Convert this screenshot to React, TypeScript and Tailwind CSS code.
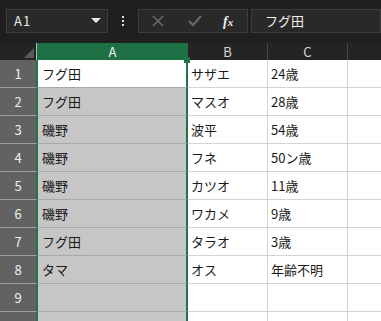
import React from "react";

const rows: [string, string, string][] = [
  ["フグ田", "サザエ", "24歳"],
  ["フグ田", "マスオ", "28歳"],
  ["磯野", "波平", "54歳"],
  ["磯野", "フネ", "50ン歳"],
  ["磯野", "カツオ", "11歳"],
  ["磯野", "ワカメ", "9歳"],
  ["フグ田", "タラオ", "3歳"],
  ["タマ", "オス", "年齢不明"],
  ["", "", ""],
  ["", "", ""],
];

const font = { fontFamily: '"Noto Sans CJK JP", "Noto Sans", sans-serif' };

export default function App() {
  return (
    <div className="w-[381px] h-[321px] overflow-hidden bg-[#1f1f1f]" style={font}>
      {/* top bar */}
      <div className="h-[43px] flex items-start pt-[9px] pl-[6px]">
        <div className="w-[102px] h-[24px] bg-[#292929] border border-[#3d3d3d] flex items-center justify-between pl-[7px] pr-[6px]">
          <span className="text-[13px] text-[#e8e8e8] tracking-[1px]">A1</span>
          <svg width="10" height="6" viewBox="0 0 10 6"><path d="M0 0 L10 0 L5 5 Z" fill="#e8e8e8" /></svg>
        </div>
        <div className="w-[30px] h-[24px] flex flex-col items-center justify-center gap-[2px]">
          <div className="w-[2px] h-[2px] bg-[#e0e0e0]" />
          <div className="w-[2px] h-[2px] bg-[#e0e0e0]" />
          <div className="w-[2px] h-[2px] bg-[#e0e0e0]" />
        </div>
        <div className="w-[110px] h-[24px] bg-[#292929] border border-[#3d3d3d] flex items-center pl-[13px]">
          <svg width="12" height="12" viewBox="0 0 12 12"><path d="M1 1 L11 11 M11 1 L1 11" stroke="#6a6a6a" strokeWidth="1.6" /></svg>
          <svg className="ml-[24px]" width="14" height="12" viewBox="0 0 14 12"><path d="M1 6 L5 10 L13 1" stroke="#6a6a6a" strokeWidth="2" fill="none" /></svg>
          <span className="ml-[21px] text-[14px] text-[#f0f0f0] italic font-bold" style={{ fontFamily: '"Liberation Serif", serif' }}>f<span className="text-[11px]">x</span></span>
        </div>
        <div className="ml-[3px] flex-1 h-[24px] bg-[#292929] border border-[#3d3d3d] flex items-center pl-[13px]">
          <span className="text-[13px] text-[#f0f0f0]">フグ田</span>
        </div>
      </div>
      {/* column header */}
      <div className="flex h-[17px] bg-[#242424]">
        <div className="w-[36px] relative">
          <svg className="absolute right-[2px] bottom-[2px]" width="10" height="10" viewBox="0 0 10 10"><path d="M10 0 L10 10 L0 10 Z" fill="#5a5a5a" /></svg>
        </div>
        <div className="w-[152px] bg-[#1e7145] border-l border-[#9fc7af] flex items-center justify-center text-[13px] text-[#f2f2f2]">A</div>
        <div className="w-[80px] border-r border-[#484848] flex items-center justify-center text-[13px] text-[#d8d8d8]">B</div>
        <div className="w-[80px] border-r border-[#484848] flex items-center justify-center text-[13px] text-[#d8d8d8]">C</div>
        <div className="flex-1" />
      </div>
      {/* rows */}
      {rows.map((r, i) => (
        <div key={i} className="flex h-[28px]">
          <div className="w-[36px] bg-[#626262] border-b border-[#9c9c9c] flex items-center justify-center text-[13px] text-[#f0f0f0]">
            {i < 9 ? i + 1 : ""}
          </div>
          <div
            className={`w-[152px] border-x-2 border-x-[#217346] ${i === 0 ? "bg-white" : "bg-[#c6c6c6]"} border-b border-b-[#a8a8a8] flex items-center pl-[4px] text-[13px] text-[#1a1a1a] relative`}
          >
            {r[0]}
            {i === 0 && <div className="absolute right-[-4px] top-[-3px] w-[6px] h-[6px] bg-[#217346]" />}
          </div>
          <div className="w-[80px] bg-white border-r border-b border-[#d4d4d4] flex items-center pl-[3px] text-[13px] text-[#1a1a1a]">{r[1]}</div>
          <div className="w-[80px] bg-white border-r border-b border-[#d4d4d4] flex items-center pl-[3px] text-[13px] text-[#1a1a1a]">{r[2]}</div>
          <div className="flex-1 bg-white border-b border-[#d4d4d4]" />
        </div>
      ))}
    </div>
  );
}
